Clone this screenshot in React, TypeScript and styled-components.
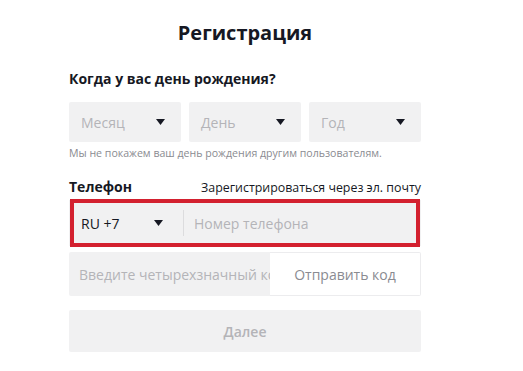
import React from 'react';
import styled, { createGlobalStyle } from 'styled-components';

const GlobalStyle = createGlobalStyle`
  html, body {
    margin: 0;
    background: #fff;
  }
  body {
    font-family: 'Open Sans', sans-serif;
    color: #161823;
  }
`;

const Form = styled.form`
  width: 352px;
  margin-left: 69px;
  padding-top: 19px;
  display: flex;
  flex-direction: column;
`;

const Title = styled.h2`
  margin: 0 0 23px;
  text-align: center;
  font-size: 20px;
  line-height: 28px;
  font-weight: 700;
`;

const Label = styled.div`
  font-size: 14px;
  line-height: 18px;
  font-weight: 700;
`;

const DateRow = styled.div`
  display: grid;
  grid-template-columns: repeat(3, 1fr);
  gap: 8px;
  margin-top: 14px;
`;

const Select = styled.div`
  height: 40px;
  background: #f1f1f2;
  border-radius: 2px;
  display: flex;
  align-items: center;
  justify-content: space-between;
  padding: 0 16px 0 12px;
  font-size: 14px;
  color: #b4b4b8;
`;

const Caret = styled.svg`
  width: 9px;
  height: 6px;
  fill: #161823;
  flex: none;
`;

const Hint = styled.div`
  margin-top: 5px;
  font-size: 10.6px;
  line-height: 13px;
  color: #8a8b91;
`;

const PhoneHeader = styled.div`
  margin-top: 18px;
  display: flex;
  justify-content: space-between;
  align-items: baseline;
`;

const Link = styled.span`
  font-size: 12.4px;
  color: #161823;
`;

const PhoneWrap = styled.div`
  position: relative;
  margin-top: 4px;
`;

const PhoneField = styled.div`
  height: 46px;
  background: #f1f1f2;
  display: flex;
  align-items: center;
`;

const Highlight = styled.div`
  position: absolute;
  inset: -1px 1px -1px 1px;
  border: 4px solid #d3202f;
  pointer-events: none;
`;

const Country = styled.div`
  width: 114px;
  padding: 0 20px 0 12px;
  box-sizing: border-box;
  display: flex;
  align-items: center;
  justify-content: space-between;
  font-size: 14px;
  color: #161823;
`;

const Divider = styled.div`
  width: 1px;
  height: 26px;
  background: #dcdcde;
`;

const Placeholder = styled.span`
  padding-left: 10px;
  font-size: 14px;
  color: #b4b4b8;
`;

const CodeRow = styled.div`
  margin-top: 6px;
  height: 44px;
  display: flex;
  background: #f1f1f2;
  border-radius: 2px;
  overflow: hidden;
`;

const CodeInput = styled.div`
  flex: 1;
  display: flex;
  align-items: center;
  padding-left: 10px;
  white-space: nowrap;
  overflow: hidden;
  font-size: 14px;
  color: #b4b4b8;
`;

const SendButton = styled.button`
  width: 151px;
  flex: none;
  border: 1px solid #ececee;
  border-left: none;
  background: #fff;
  font-family: inherit;
  font-size: 14px;
  color: #8a8b91;
  border-radius: 0 2px 2px 0;
`;

const NextButton = styled.button`
  margin-top: 14px;
  height: 42px;
  border: none;
  border-radius: 2px;
  background: #f1f1f2;
  font-family: inherit;
  font-size: 14px;
  font-weight: 600;
  color: #b4b4b8;
`;

const ArrowDown = () => (
  <Caret viewBox="0 0 9 6">
    <path d="M0 0h9L4.5 6z" />
  </Caret>
);

const App: React.FC = () => (
  <>
    <GlobalStyle />
    <Form onSubmit={(e) => e.preventDefault()}>
      <Title>Регистрация</Title>
      <Label>Когда у вас день рождения?</Label>
      <DateRow>
        {['Месяц', 'День', 'Год'].map((name) => (
          <Select key={name}>
            {name}
            <ArrowDown />
          </Select>
        ))}
      </DateRow>
      <Hint>Мы не покажем ваш день рождения другим пользователям.</Hint>
      <PhoneHeader>
        <Label>Телефон</Label>
        <Link>Зарегистрироваться через эл. почту</Link>
      </PhoneHeader>
      <PhoneWrap>
        <PhoneField>
          <Country>
            RU +7
            <ArrowDown />
          </Country>
          <Divider />
          <Placeholder>Номер телефона</Placeholder>
        </PhoneField>
        <Highlight />
      </PhoneWrap>
      <CodeRow>
        <CodeInput>Введите четырехзначный код</CodeInput>
        <SendButton type="button">Отправить код</SendButton>
      </CodeRow>
      <NextButton type="submit">Далее</NextButton>
    </Form>
  </>
);

export default App;
